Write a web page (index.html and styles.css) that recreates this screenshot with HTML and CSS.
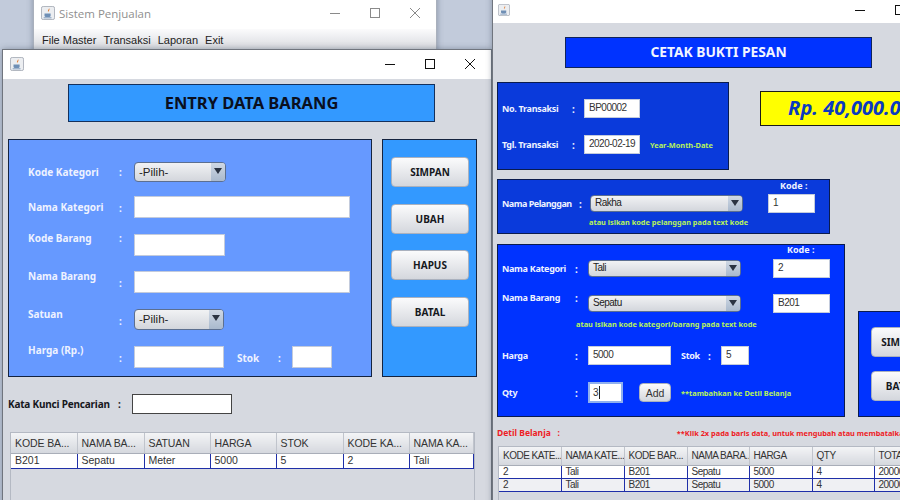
FILE: index.html
```html
<!DOCTYPE html>
<html lang="id">
<head>
<meta charset="UTF-8">
<meta name="viewport" content="width=device-width, initial-scale=1.0">
<title>Sistem Penjualan</title>
<link rel="stylesheet" href="styles.css">
</head>
<body>
<svg class="defs" width="0" height="0">
  <symbol id="java" viewBox="0 0 16 16">
    <rect x="0.5" y="0.5" width="15" height="15" rx="2" fill="#eceef1" stroke="#a3a9b4"/>
    <path d="M9 2c1 1.800-2.200 2.800-.6 5.200C8 5.600 11 5 9 2z" fill="#e0792e"/>
    <path d="M4 8.500h7V11c0 1-1 1.500-2 1.500H6c-1 0-2-.5-2-1.500z" fill="#6f8fb5"/>
    <path d="M3 13.500h9" stroke="#6f8fb5"/>
  </symbol>
  <symbol id="min" viewBox="0 0 10 10"><path d="M0 5.500h10" stroke="currentColor"/></symbol>
  <symbol id="max" viewBox="0 0 10 10"><rect x="0.5" y="0.5" width="9" height="9" fill="none" stroke="currentColor"/></symbol>
  <symbol id="close" viewBox="0 0 10 10"><path d="M0 0l10 10M10 0L0 10" stroke="currentColor"/></symbol>
</svg>

<div class="desktop">

  <div class="window win-main">
    <div class="titlebar titlebar-main">
      <svg class="java"><use href="#java"/></svg>
      <span class="win-title">Sistem Penjualan</span>
      <svg class="ctl ctl-first"><use href="#min"/></svg>
      <svg class="ctl"><use href="#max"/></svg>
      <svg class="ctl"><use href="#close"/></svg>
    </div>
    <div class="menubar">
      <span>File Master</span><span>Transaksi</span><span>Laporan</span><span>Exit</span>
    </div>
  </div>

  <div class="window win-barang">
    <div class="titlebar">
      <svg class="java"><use href="#java"/></svg>
      <svg class="ctl ctl-first"><use href="#min"/></svg>
      <svg class="ctl"><use href="#max"/></svg>
      <svg class="ctl"><use href="#close"/></svg>
    </div>
    <div class="winbody">
      <h1 class="head-barang">ENTRY DATA BARANG</h1>
      <div class="barang-panels">
        <div class="panel-form">
          <div class="frow r1"><label>Kode Kategori</label><b>:</b><div class="combo w92">-Pilih-<i></i></div></div>
          <div class="frow r2"><label>Nama Kategori</label><b>:</b><div class="input w216"></div></div>
          <div class="frow r3"><label>Kode Barang</label><b>:</b><div class="input w91"></div></div>
          <div class="frow r4"><label>Nama Barang</label><b>:</b><div class="input w216"></div></div>
          <div class="frow r5"><label>Satuan</label><b>:</b><div class="combo w90">-Pilih-<i></i></div></div>
          <div class="frow r6"><label>Harga (Rp.)</label><b>:</b><div class="input w90"></div><label class="stok">Stok</label><b class="stok-colon">:</b><div class="input w40"></div></div>
        </div>
        <div class="panel-buttons">
          <button>SIMPAN</button>
          <button>UBAH</button>
          <button>HAPUS</button>
          <button>BATAL</button>
        </div>
      </div>
      <div class="search"><label>Kata Kunci Pencarian</label><b>:</b><div class="search-box"></div></div>
      <div class="tablewrap tw-barang">
        <table class="grid">
          <colgroup><col class="c66"><col class="c67"><col class="c66"><col class="c66"><col class="c67"><col class="c66"><col></colgroup>
          <thead><tr><th>KODE BA...</th><th>NAMA BA...</th><th>SATUAN</th><th>HARGA</th><th>STOK</th><th>KODE KA...</th><th>NAMA KA...</th></tr></thead>
          <tbody><tr class="sel"><td>B201</td><td>Sepatu</td><td>Meter</td><td>5000</td><td>5</td><td>2</td><td>Tali</td></tr></tbody>
        </table>
      </div>
    </div>
  </div>

  <div class="window win-pesan">
    <div class="titlebar titlebar-pesan">
      <svg class="java"><use href="#java"/></svg>
      <svg class="ctl ctl-first"><use href="#min"/></svg>
      <svg class="ctl"><use href="#max"/></svg>
      <svg class="ctl"><use href="#close"/></svg>
    </div>
    <div class="winbody pesan-body">
      <h1 class="head-pesan">CETAK BUKTI PESAN</h1>
      <div class="pesan-top">
        <div class="panel-trans">
          <div class="trow"><label>No. Transaksi</label><b>:</b><div class="input w56">BP00002</div></div>
          <div class="trow"><label>Tgl. Transaksi</label><b>:</b><div class="input w56">2020-02-19</div><span class="hint hint-date">Year-Month-Date</span></div>
        </div>
        <div class="total">Rp. 40,000.0</div>
      </div>
      <div class="panel-pelanggan">
        <div class="kode-cap kode-pel">Kode :</div>
        <div class="prow">
          <label>Nama Pelanggan</label><b>:</b>
          <div class="combo w153">Rakha<i></i></div>
          <div class="input w47">1</div>
        </div>
        <div class="hint hint-pel">atau isikan kode pelanggan pada text kode</div>
      </div>
      <div class="pesan-mid">
        <div class="panel-item">
          <div class="kode-cap kode-item">Kode :</div>
          <div class="irow">
            <label>Nama Kategori</label><b>:</b>
            <div class="combo w152">Tali<i></i></div>
            <div class="input w57">2</div>
          </div>
          <div class="irow irow-barang">
            <label class="up6">Nama Barang</label><b class="up6">:</b>
            <div class="combo w152">Sepatu<i></i></div>
            <div class="input w57">B201</div>
          </div>
          <div class="hint hint-item">atau isikan kode kategori/barang pada text kode</div>
          <div class="irow irow-harga">
            <label>Harga</label><b>:</b>
            <div class="input w82">5000</div>
            <label class="stok2">Stok</label><b class="stok2-colon">:</b>
            <div class="input w27">5</div>
          </div>
          <div class="irow irow-qty">
            <label>Qty</label><b>:</b>
            <div class="input input-focus">3<span class="caret"></span></div>
            <button class="add">Add</button>
            <span class="hint hint-add">**tambahkan ke Detil Belanja</span>
          </div>
        </div>
        <div class="panel-act">
          <button>SIMPAN</button>
          <button>BATAL</button>
        </div>
      </div>
      <div class="notes">
        <span class="note-left">Detil Belanja &nbsp; :</span>
        <span class="note-right">**Klik 2x pada baris data, untuk mengubah atau membatalkan</span>
      </div>
      <div class="tablewrap tw-pesan">
        <table class="grid">
          <colgroup><col class="c62"><col class="c63"><col class="c63"><col class="c62"><col class="c63"><col class="c62"><col></colgroup>
          <thead><tr><th>KODE KATE...</th><th>NAMA KATE...</th><th>KODE BAR...</th><th>NAMA BARA...</th><th>HARGA</th><th>QTY</th><th>TOTAL</th></tr></thead>
          <tbody>
            <tr class="sel"><td>2</td><td>Tali</td><td>B201</td><td>Sepatu</td><td>5000</td><td>4</td><td>20000</td></tr>
            <tr class="sel alt"><td>2</td><td>Tali</td><td>B201</td><td>Sepatu</td><td>5000</td><td>4</td><td>20000</td></tr>
          </tbody>
        </table>
      </div>
    </div>
  </div>

</div>
</body>
</html>
```

FILE: styles.css
```css
* {
  box-sizing: border-box;
}
body {
  margin: 0;
  font-family: "Liberation Sans", Arial, sans-serif;
  font-size: 11px;
  color: #222;
}
.defs {
  position: absolute;
}
.desktop {
  position: relative;
  width: 900px;
  height: 500px;
  overflow: hidden;
  background-color: #c2cbdb;
}

/* windows on the desktop */
.window {
  position: absolute;
  background-color: #d6d9e0;
  border: 1px solid #70757e;
  box-shadow: 0 0 6px rgba(60, 70, 90, 0.45);
}
.win-main {
  left: 33px;
  top: -8px;
  width: 404px;
  height: 70px;
  border-color: #a9b0bc;
}
.win-barang {
  left: 2px;
  top: 49px;
  width: 490px;
  height: 470px;
}
.win-pesan {
  left: 492px;
  top: -6px;
  width: 470px;
  height: 530px;
}
.titlebar {
  display: flex;
  align-items: center;
  height: 29px;
  padding: 0 0 2px 7px;
  background-color: #fff;
  color: #111;
}
.titlebar-main {
  height: 36px;
  padding: 6px 0 2px 7px;
  color: #8a8a8a;
}
.titlebar-pesan {
  height: 28px;
  padding: 1px 0 0 5px;
}
.java {
  width: 14px;
  height: 14px;
}
.titlebar-pesan .java {
  width: 12px;
  height: 12px;
}
.win-title {
  margin-left: 4px;
  font-family: "Open Sans", sans-serif;
  font-size: 11.5px;
  color: #8f8f8f;
}
.ctl {
  width: 10px;
  height: 10px;
  margin-left: 30px;
  color: inherit;
}
.ctl-first {
  margin-left: auto;
}
.titlebar .ctl:last-child {
  margin-right: 16px;
}
.menubar {
  display: flex;
  gap: 7px;
  height: 21px;
  padding: 5px 8px 0;
  background: linear-gradient(#fbfbfc, #d7d9de);
  font-size: 11px;
  color: #222;
}

/* shared widgets */
label {
  flex: none;
  font-family: "Noto Sans", sans-serif;
  font-weight: 700;
  font-size: 10px;
  white-space: nowrap;
  color: #eef2ff;
}
.window b {
  flex: none;
  font-family: "Noto Sans", sans-serif;
  font-size: 10px;
  color: #eef2ff;
}
.input {
  flex: none;
  height: 22px;
  padding: 3px 0 0 4px;
  background-color: #fff;
  border: 1px solid #c3cbdc;
  font-size: 10px;
  letter-spacing: -0.5px;
  white-space: nowrap;
  color: #333;
}
.combo {
  position: relative;
  flex: none;
  height: 20px;
  padding: 3px 0 0 4px;
  background: linear-gradient(#f1f2f4, #d3d6dc);
  border: 1px solid #5c6f90;
  border-radius: 4px;
  font-size: 11.5px;
  color: #222;
}
.combo i {
  position: absolute;
  right: 0;
  top: 0;
  bottom: 0;
  width: 14px;
  background: linear-gradient(#cfd8e4, #a9b9cd);
  border-radius: 0 3px 3px 0;
}
.combo i::after {
  content: "";
  position: absolute;
  left: 3px;
  top: 5px;
  border: 4px solid transparent;
  border-top: 6px solid #2a3342;
  border-bottom: 0;
}
button {
  display: block;
  padding: 0;
  background: linear-gradient(#fbfbfc, #d4d7dd);
  border: 1px solid #aab1be;
  border-radius: 4px;
  font-family: "Noto Sans", sans-serif;
  font-weight: 700;
  font-size: 10px;
  color: #16181d;
}
.hint {
  flex: none;
  font-family: "Noto Sans", sans-serif;
  font-weight: 700;
  font-size: 7.4px;
  white-space: nowrap;
  color: #b8f25a;
}

/* sizes */
.w27 { width: 28px; height: 19px; padding-top: 2px; }
.w40 { width: 40px; }
.w47 { width: 47px; height: 19px; padding-top: 2px; }
.w56 { width: 56px; height: 19px; padding-top: 2px; }
.w57 { width: 57px; height: 19px; padding-top: 2px; }
.w82 { width: 83px; height: 19px; padding-top: 2px; }
.w90 { width: 90px; }
.w91 { width: 91px; }
.w92 { width: 92px; }
.w152 { width: 153px; height: 17px; padding-top: 1px; font-size: 10px; letter-spacing: -0.5px; }
.w153 { width: 153px; height: 17px; padding-top: 1px; font-size: 10px; letter-spacing: -0.5px; }
.w216 { width: 216px; }
.w152 i::after, .w153 i::after { top: 4px; }
.combo.w90 { height: 21px; }

/* entry data barang */
.head-barang {
  width: 367px;
  height: 38px;
  margin: 5px 0 0 65px;
  background-color: #3399ff;
  border: 1px solid #14305c;
  font-family: "Noto Sans", sans-serif;
  font-weight: 700;
  font-size: 16.5px;
  line-height: 35px;
  text-align: center;
  color: #0a0f1e;
}
.barang-panels {
  display: flex;
  gap: 10px;
  margin: 17px 0 0 5px;
}
.panel-form {
  width: 364px;
  height: 238px;
  padding: 22px 0 0 19px;
  background-color: #6699ff;
  border: 1px solid #14233f;
}
.frow {
  display: flex;
  align-items: flex-start;
}
.frow label {
  width: 91px;
  line-height: 20px;
}
.frow > b {
  position: relative;
  top: 2px;
  width: 15px;
  line-height: 20px;
}
.r1 > b, .r3 > b {
  top: 0;
}
.r2 { margin-top: 14px; }
.r3 { margin-top: 16px; }
.r4 { margin-top: 15px; }
.r5 { margin-top: 16px; }
.r6 { margin-top: 16px; }
.r2 label { margin-top: 1px; }
.r3 label, .r3 > b { margin-top: -6px; }
.r4 label, .r5 label { margin-top: -5px; }
.r6 > label:first-child { margin-top: -6px; }
.frow .stok {
  width: 41px;
  margin: 0 0 0 13px;
  line-height: 24px;
}
.frow .stok-colon {
  top: 0;
  width: 14px;
  line-height: 24px;
}
.panel-buttons {
  width: 95px;
  height: 238px;
  padding: 17px 0 0 8px;
  background-color: #3399ff;
  border: 1px solid #14233f;
}
.panel-buttons button {
  width: 78px;
  height: 30px;
  margin-bottom: 16.5px;
}
.search {
  display: flex;
  align-items: center;
  height: 20px;
  margin: 17px 0 0 5px;
}
.search label, .window .search b {
  color: #16181d;
}
.search label {
  width: 110px;
  letter-spacing: -0.2px;
}
.search b {
  width: 14px;
}
.search-box {
  width: 100px;
  height: 20px;
  background-color: #fff;
  border: 1px solid #444;
}
.tablewrap {
  background-color: #d6d9e0;
  border: 1px solid #b4b9c3;
}
.tw-barang {
  width: 465px;
  height: 90px;
  margin: 18px 0 0 7px;
}
table.grid {
  width: 100%;
  border-collapse: collapse;
  table-layout: fixed;
}
.c66 { width: 66px; }
.c67 { width: 67px; }
.c62 { width: 62px; }
.c63 { width: 63px; }
.grid th {
  height: 20px;
  padding: 0 0 0 4px;
  background: linear-gradient(#f3f4f6, #d5d8de);
  border-right: 1px solid #c0c4cc;
  border-bottom: 1px solid #a9aeb8;
  font-weight: 400;
  font-size: 10.5px;
  letter-spacing: -0.1px;
  text-align: left;
  color: #333;
  white-space: nowrap;
  overflow: hidden;
}
.grid td {
  height: 15px;
  padding: 0 0 0 4px;
  background-color: #fff;
  border-right: 1px solid #1f2fa8;
  border-bottom: 1px solid #1f2fa8;
  font-size: 10.5px;
  line-height: 13px;
  color: #333;
}
.grid tr.alt td {
  background-color: #eff0f3;
}

/* cetak bukti pesan */
.pesan-body {
  padding-left: 4px;
}
.head-pesan {
  position: relative;
  top: 14px;
  width: 307px;
  height: 31px;
  margin: 0 0 0 68px;
  background-color: #0033ff;
  border: 1px solid #10245a;
  font-family: "Noto Sans", sans-serif;
  font-weight: 700;
  font-size: 13.8px;
  line-height: 28px;
  text-align: center;
  color: #f2f5ff;
}
.pesan-top {
  display: flex;
  gap: 31px;
  margin-top: 28px;
}
.panel-trans {
  width: 232px;
  height: 88px;
  padding: 16px 0 0 4px;
  background-color: #0a3adb;
  border: 1px solid #0a1b4e;
}
.trow {
  display: flex;
  align-items: center;
  margin-bottom: 17px;
}
.trow label, .prow label, .irow label {
  font-size: 9px;
  letter-spacing: -0.3px;
}
.trow label {
  width: 70px;
}
.trow > b {
  width: 12px;
}
.hint-date {
  margin-left: 10px;
}
.total {
  flex: none;
  width: 180px;
  height: 35px;
  margin-top: 9px;
  padding-left: 27px;
  background-color: #ffff00;
  border: 1px solid #1a1a1a;
  font-family: "Noto Sans", sans-serif;
  font-weight: 700;
  font-style: italic;
  font-size: 20px;
  line-height: 32px;
  white-space: nowrap;
  color: #0a3ac0;
}
.panel-pelanggan {
  position: relative;
  width: 333px;
  height: 55px;
  margin-top: 9px;
  padding: 14px 0 0 4px;
  background-color: #0a3adb;
  border: 1px solid #0a1b4e;
}
.kode-cap {
  position: absolute;
  font-family: "Noto Sans", sans-serif;
  font-weight: 700;
  font-size: 9px;
  line-height: 12px;
  color: #eef2ff;
}
.kode-pel { left: 282px; top: 0; }
.kode-item { left: 289px; top: -1px; }
.prow {
  display: flex;
  align-items: center;
}
.prow label {
  width: 77px;
  letter-spacing: -0.5px;
}
.prow > b {
  width: 11px;
}
.prow .input {
  margin-left: 25px;
}
.hint-pel {
  margin: 4px 0 0 87px;
}
.pesan-mid {
  display: flex;
  align-items: flex-end;
  gap: 13px;
  margin-top: 10px;
}
.panel-item {
  position: relative;
  flex: none;
  width: 348px;
  height: 173px;
  padding: 14px 0 0 4px;
  background-color: #0033ff;
  border: 1px solid #0a1b4e;
}
.irow {
  display: flex;
  align-items: center;
}
.irow label {
  width: 73px;
}
.irow > b {
  width: 13px;
}
.irow .up6 {
  position: relative;
  top: -6px;
}
.irow .w57 {
  margin-left: 32px;
}
.irow-barang {
  margin-top: 16px;
}
.hint-item {
  margin: 6px 0 0 74px;
}
.irow-harga {
  margin-top: 17px;
}
.irow .stok2 {
  width: 27px;
  margin-left: 10px;
}
.irow .stok2-colon {
  width: 13px;
}
.irow-qty {
  margin-top: 17px;
}
.input-focus {
  width: 35px;
  height: 21px;
  border: 2px solid #8fb0ee;
  padding: 2px 0 0 3px;
}
.caret {
  display: inline-block;
  width: 1px;
  height: 13px;
  margin-left: 1px;
  vertical-align: -3px;
  background-color: #222;
}
.add {
  flex: none;
  width: 32px;
  height: 19px;
  margin-left: 16px;
  font-family: "Liberation Sans", sans-serif;
  font-weight: 400;
  font-size: 10.5px;
  color: #333;
}
.hint-add {
  margin-left: 10px;
}
.panel-act {
  flex: none;
  width: 100px;
  height: 106px;
  padding: 15px 0 0 12px;
  background-color: #0033ff;
  border: 1px solid #0a1b4e;
}
.panel-act button {
  width: 60px;
  height: 30px;
  margin-bottom: 14px;
  white-space: nowrap;
}
.notes {
  display: flex;
  align-items: center;
  margin-top: 10px;
  font-family: "Noto Sans", sans-serif;
  font-weight: 700;
  font-size: 7.4px;
  color: #ee1c25;
}
.note-left {
  font-size: 8.5px;
}
.note-right {
  margin-left: 117px;
  white-space: nowrap;
}
.tw-pesan {
  width: 445px;
  height: 70px;
  margin: 8px 0 0 1px;
}
.tw-pesan th {
  height: 18px;
  font-size: 10px;
  letter-spacing: -0.5px;
}
.tw-pesan td {
  height: 13px;
  font-size: 10px;
  letter-spacing: -0.5px;
  line-height: 12px;
}
```
